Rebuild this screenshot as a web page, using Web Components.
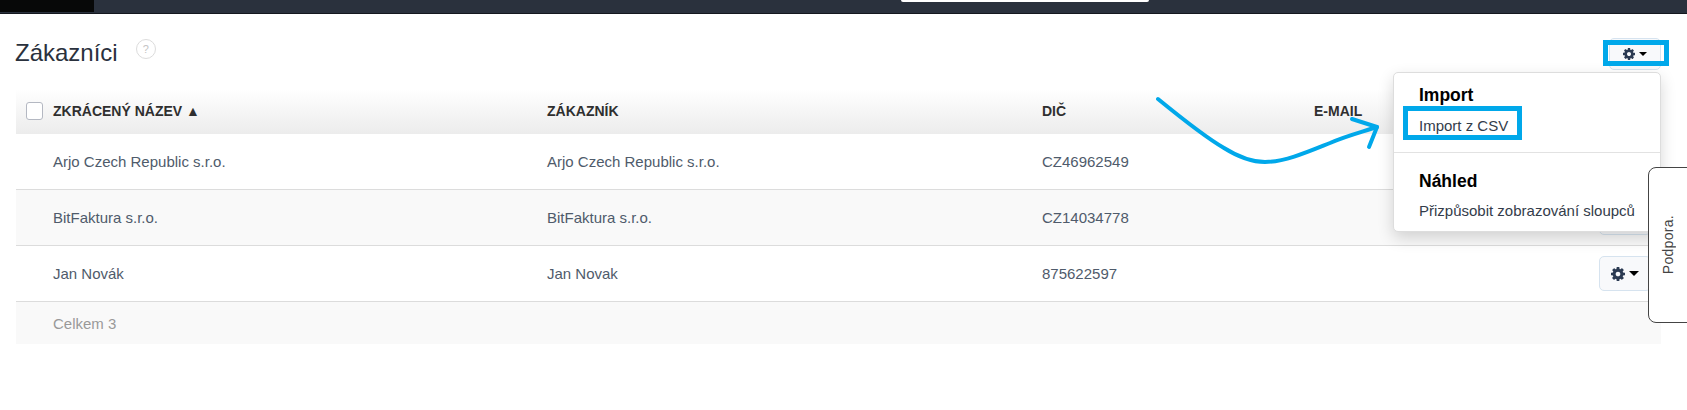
<!DOCTYPE html>
<html lang="cs">
<head>
<meta charset="utf-8">
<title>Zákazníci</title>
<style>
    html, body { margin: 0; height: 100%; overflow: hidden; background: #fff; }
    body { font-family: "Liberation Sans", Arial, sans-serif; color: #4f5b6b; }
</style>
</head>
<body>
<app-topbar></app-topbar>
<customers-page>
    <page-title slot="title">Zákazníci</page-title>
    <gear-button slot="actions" variant="top"></gear-button>
    <data-table>
        <table-head></table-head>
        <table-row name="Arjo Czech Republic s.r.o." customer="Arjo Czech Republic s.r.o." vat="CZ46962549"></table-row>
        <table-row name="BitFaktura s.r.o." customer="BitFaktura s.r.o." vat="CZ14034778" striped></table-row>
        <table-row name="Jan Novák" customer="Jan Novak" vat="875622597"></table-row>
        <table-foot>Celkem 3</table-foot>
    </data-table>
    <dropdown-menu slot="overlay"></dropdown-menu>
    <annotation-layer slot="overlay"></annotation-layer>
</customers-page>
<support-tab>Podpora.</support-tab>

<script>
const GEAR = "M1024 640q0-106-75-181t-181-75-181 75-75 181 75 181 181 75 181-75 75-181zm512-109v222q0 12-8 23t-20 13l-185 28q-19 54-39 91 35 50 107 138 10 12 10 25t-9 23q-27 37-99 108t-94 71q-12 0-26-9l-138-108q-44 23-91 38-16 136-29 186-7 28-36 28h-222q-14 0-24.5-8.5t-11.5-21.5l-28-184q-49-16-90-37l-141 107q-10 9-25 9-14 0-25-11-126-114-165-168-7-10-7-23 0-12 8-23 15-21 51-66.5t54-70.5q-27-50-41-99l-183-27q-13-2-21-12.5t-8-23.5v-222q0-12 8-23t19-13l186-28q14-46 39-92-40-57-107-138-10-12-10-24 0-10 9-23 26-36 98.5-107.5t94.5-71.5q13 0 26 10l138 107q44-23 91-38 16-136 29-186 7-28 36-28h222q14 0 24.5 8.5t11.5 21.5l28 184q49 16 90 37l142-107q9-9 24-9 13 0 25 10 129 119 165 170 7 8 7 22 0 12-8 23-15 21-51 66.5t-54 70.5q26 50 41 98l183 28q13 2 21 12.5t8 23.5z";

class AppTopbar extends HTMLElement {
    constructor() {
        super();
        this.attachShadow({ mode: "open" });
        this.shadowRoot.innerHTML = `
            <style>
                :host { display: flex; justify-content: space-between; height: 13px; background: #2a313d; border-bottom: 1px solid #14181f; }
                .logo { width: 94px; height: 12px; background: #070808; }
                .search { width: 248px; height: 2px; margin-right: 538px; background: #fff; border-radius: 0 0 3px 3px; }
            </style>
            <div class="logo"></div>
            <div class="search"></div>
        `;
    }
}

class CustomersPage extends HTMLElement {
    constructor() {
        super();
        this.attachShadow({ mode: "open" });
        this.shadowRoot.innerHTML = `
            <style>
                :host { display: block; position: relative; padding: 0 26px 0 16px; }
                header { display: flex; justify-content: space-between; align-items: flex-start; height: 75px; }
            </style>
            <header>
                <slot name="title"></slot>
                <slot name="actions"></slot>
            </header>
            <slot></slot>
            <slot name="overlay"></slot>
        `;
    }
}

class PageTitle extends HTMLElement {
    constructor() {
        super();
        this.attachShadow({ mode: "open" });
        this.shadowRoot.innerHTML = `
            <style>
                :host { display: flex; align-items: flex-start; gap: 18px; margin-left: -1px; padding-top: 25px; }
                h1 { margin: 0; font-size: 24px; font-weight: 400; line-height: 28px; color: #2a313d; }
                .help { width: 18px; height: 18px; border: 1px solid #dcdcdc; border-radius: 50%; font-size: 11px; line-height: 18px; text-align: center; color: #c4c4c4; }
            </style>
            <h1><slot></slot></h1>
            <div class="help">?</div>
        `;
    }
}

class GearButton extends HTMLElement {
    constructor() {
        super();
        this.attachShadow({ mode: "open" });
        const top = this.getAttribute("variant") === "top";
        this.shadowRoot.innerHTML = `
            <style>
                :host { display: inline-flex; align-items: center; box-sizing: border-box; gap: 4px; height: ${top ? 32 : 35}px; margin-top: ${top ? 24 : 0}px; padding: 0 ${top ? 13 : 11}px; background: #f8f9fb; border: 1px solid #d6e3ef; border-radius: 5px; }
                svg { display: block; width: ${top ? 12 : 14}px; height: ${top ? 12 : 14}px; fill: #2b3a52; }
                i { width: 0; height: 0; border: ${top ? 4.5 : 5}px solid transparent; border-top: ${top ? 4.5 : 5}px solid #000; border-bottom: 0; }
            </style>
            <svg viewBox="0 -128 1536 1536"><path d="${GEAR}"/></svg>
            <i></i>
        `;
    }
}

const COLS = "grid-template-columns: 494px 495px 272px 1fr;";

class DataTable extends HTMLElement {
    constructor() {
        super();
        this.attachShadow({ mode: "open" });
        this.shadowRoot.innerHTML = `
            <style>:host { display: block; }</style>
            <slot></slot>
        `;
    }
}

class TableHead extends HTMLElement {
    constructor() {
        super();
        this.attachShadow({ mode: "open" });
        this.shadowRoot.innerHTML = `
            <style>
                :host { display: grid; ${COLS} align-items: center; height: 45px; padding-left: 37px; background: linear-gradient(#fff, #ececec); font-size: 14px; font-weight: 700; color: #2f2f2f; position: relative; }
                div { margin-top: -2px; }
                .check { position: absolute; left: 10px; top: 13px; width: 15px; height: 16px; margin: 0; background: #fff; border: 1px solid #b4b8c2; border-radius: 3px; }
            </style>
            <div class="check"></div>
            <div>ZKRÁCENÝ NÁZEV ▲</div>
            <div>ZÁKAZNÍK</div>
            <div>DIČ</div>
            <div>E-MAIL</div>
        `;
    }
}

class TableRow extends HTMLElement {
    constructor() {
        super();
        this.attachShadow({ mode: "open" });
        const name = this.getAttribute("name");
        const customer = this.getAttribute("customer");
        const vat = this.getAttribute("vat");
        this.shadowRoot.innerHTML = `
            <style>
                :host { display: grid; ${COLS} align-items: center; box-sizing: border-box; height: 56px; padding-left: 37px; border-bottom: 1px solid #dcdcdc; font-size: 15px; color: #4f5b6b; }
                :host([striped]) { background: #f9f9f9; }
                .actions { display: flex; justify-content: flex-end; padding-right: 10px; }
            </style>
            <div>${name}</div>
            <div>${customer}</div>
            <div>${vat}</div>
            <div class="actions"><gear-button></gear-button></div>
        `;
    }
}

class TableFoot extends HTMLElement {
    constructor() {
        super();
        this.attachShadow({ mode: "open" });
        this.shadowRoot.innerHTML = `
            <style>
                :host { display: flex; align-items: center; height: 42px; padding-left: 37px; background: #f9f9f9; font-size: 15px; color: #999; }
            </style>
            <slot></slot>
        `;
    }
}

class DropdownMenu extends HTMLElement {
    constructor() {
        super();
        this.attachShadow({ mode: "open" });
        this.shadowRoot.innerHTML = `
            <style>
                :host { position: absolute; top: 58px; right: 26px; box-sizing: border-box; width: 268px; height: 160px; padding: 0 25px; background: #fff; border: 1px solid #ddd; border-radius: 5px; box-shadow: 0 6px 16px rgba(0,0,0,.16); color: #000; }
                h4 { margin: 0; font-size: 17.5px; line-height: 20px; font-weight: 700; }
                p { margin: 0; font-size: 15px; line-height: 16px; color: #333c4a; white-space: nowrap; }
                .one { padding-top: 12px; height: 67px; box-sizing: border-box; }
                .one p { margin-top: 13px; }
                hr { margin: 12px -25px 0; border: 0; border-top: 1px solid #e2e2e2; }
                .two { padding-top: 18px; }
                .two p { margin-top: 12px; }
            </style>
            <div class="one"><h4>Import</h4><p>Import z CSV</p></div>
            <hr>
            <div class="two"><h4>Náhled</h4><p>Přizpůsobit zobrazování sloupců</p></div>
        `;
    }
}

// blue hand drawn marks from the screenshot
class AnnotationLayer extends HTMLElement {
    constructor() {
        super();
        this.attachShadow({ mode: "open" });
        this.shadowRoot.innerHTML = `
            <style>
                :host { position: absolute; left: 0; top: -14px; width: 1687px; height: 410px; pointer-events: none; }
                svg { display: block; }
                path { fill: none; stroke: #00a8ea; stroke-width: 4; stroke-linecap: round; stroke-linejoin: round; }
                rect { fill: none; stroke: #00a8ea; stroke-width: 5; }
            </style>
            <svg width="1687" height="410">
                <rect x="1605.5" y="42.5" width="61" height="21"/>
                <rect x="1405.5" y="108.5" width="114" height="29"/>
                <path d="M1158 99C1180 117 1205 137 1224 148C1240 158 1252 162 1265 162C1285 162 1310 151 1330 143C1346 136 1362 132 1377 127"/>
                <path d="M1352 119L1377 127L1369 147"/>
            </svg>
        `;
    }
}

class SupportTab extends HTMLElement {
    constructor() {
        super();
        this.attachShadow({ mode: "open" });
        this.shadowRoot.innerHTML = `
            <style>
                :host { position: fixed; left: 1648px; top: 167px; box-sizing: border-box; display: flex; align-items: center; justify-content: center; width: 60px; height: 156px; padding-right: 21px; background: #fff; border: 1px solid #444; border-radius: 8px 0 0 8px; font-size: 14px; color: #444; }
                span { writing-mode: vertical-rl; transform: rotate(180deg); letter-spacing: .3px; }
            </style>
            <span><slot></slot></span>
        `;
    }
}

customElements.define("gear-button", GearButton);
customElements.define("app-topbar", AppTopbar);
customElements.define("customers-page", CustomersPage);
customElements.define("page-title", PageTitle);
customElements.define("data-table", DataTable);
customElements.define("table-head", TableHead);
customElements.define("table-row", TableRow);
customElements.define("table-foot", TableFoot);
customElements.define("dropdown-menu", DropdownMenu);
customElements.define("annotation-layer", AnnotationLayer);
customElements.define("support-tab", SupportTab);
</script>
</body>
</html>
